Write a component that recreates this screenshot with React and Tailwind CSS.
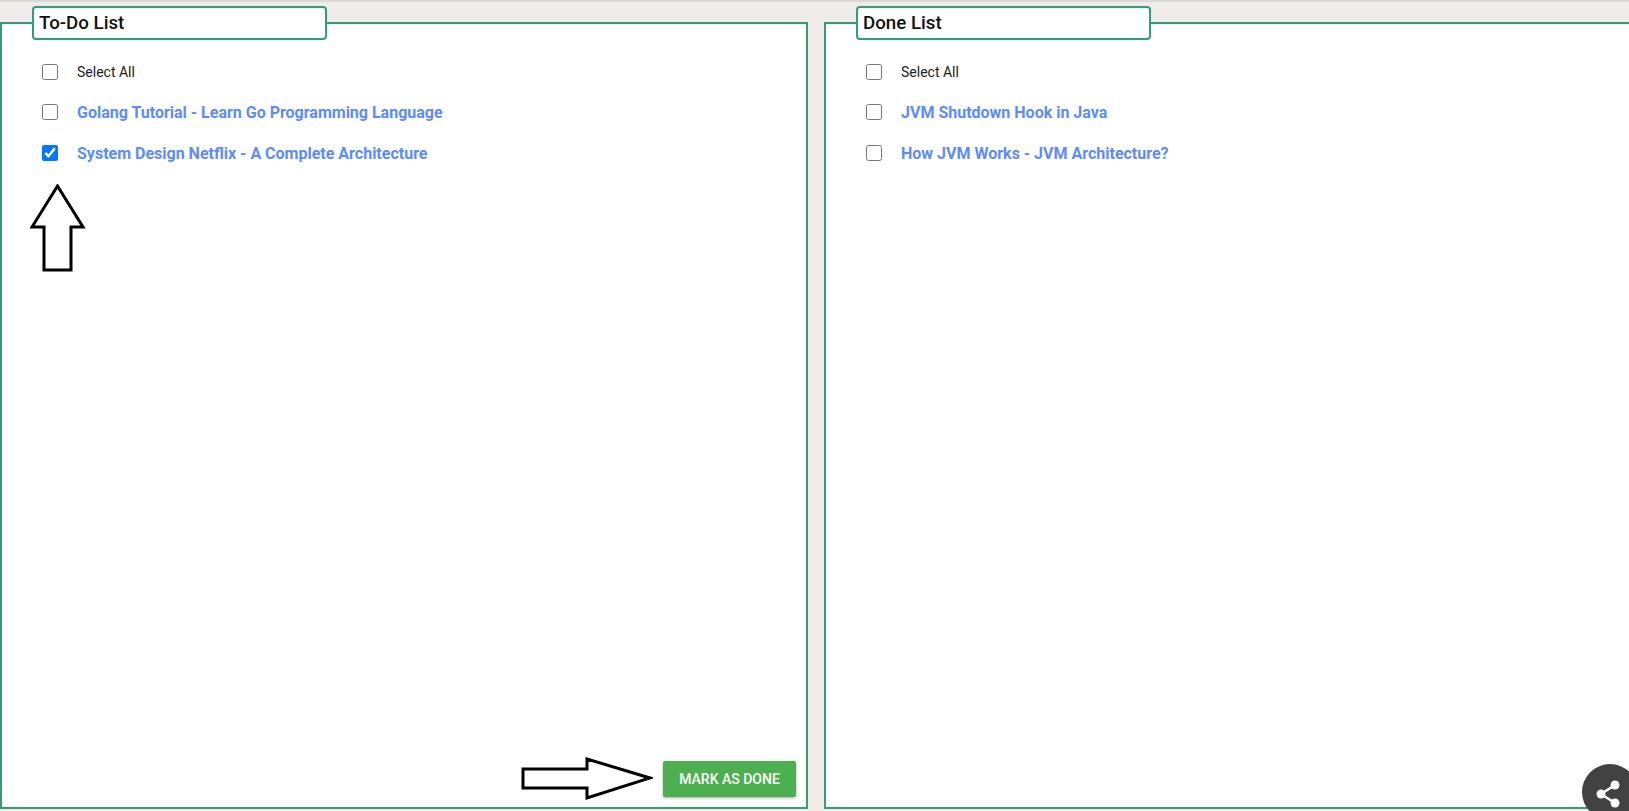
const todo = [
  { title: 'Golang Tutorial - Learn Go Programming Language', checked: false },
  { title: 'System Design Netflix - A Complete Architecture', checked: true },
];

const done = [
  { title: 'JVM Shutdown Hook in Java', checked: false },
  { title: 'How JVM Works - JVM Architecture?', checked: false },
];

function ListPanel({ title, items, children }) {
  return (
    <fieldset className="relative shrink-0 w-[808px] h-[803px] border-2 border-[#319e78] bg-white min-w-0">
      <legend className="ml-[30px] w-[295px] h-[34px] px-[5px] flex items-center bg-white border-2 border-[#319e78] rounded-[4px] text-[18.72px] leading-none font-medium text-[#111]">
        {title}
      </legend>
      <div className="pl-[40px] pt-[24px]">
        <label className="flex items-center h-[16px] mb-[24px]">
          <input type="checkbox" readOnly className="w-[16px] h-[16px] m-0" />
          <span className="ml-[19px] text-[14px] text-[#212121]">Select All</span>
        </label>
        {items.map((item) => (
          <label key={item.title} className="flex items-center h-[16px] mb-[25px]">
            <input type="checkbox" readOnly checked={item.checked} className="w-[16px] h-[16px] m-0" />
            <a href="#" className="ml-[19px] pt-[2px] text-[16px] font-bold text-[#5c8cfb]">{item.title}</a>
          </label>
        ))}
      </div>
      {children}
    </fieldset>
  );
}

export default function App() {
  return (
    <div className="relative w-screen h-[811px] overflow-hidden bg-[#efebe9] font-['Roboto',sans-serif]">
      <div className="h-[2px] bg-[#dcdad8]"></div>
      <div className="flex gap-[16px] pt-[4px]">
        <ListPanel title="To-Do List" items={todo}>
          <button className="absolute right-[10px] bottom-[10px] w-[133px] h-[36px] bg-[#4caf50] text-white text-[14px] font-medium rounded-[2px] shadow-[0_1px_3px_rgba(0,0,0,0.35)]">
            MARK AS DONE
          </button>
        </ListPanel>
        <ListPanel title="Done List" items={done} />
      </div>

      {/* annotation arrows */}
      <svg className="absolute left-[30px] top-[184px]" width="56" height="90" viewBox="0 0 56 90" fill="white" stroke="black" strokeWidth="3">
        <path d="M27.5 2 L53 43 L41 43 L41 86 L14 86 L14 43 L2 43 Z" />
      </svg>
      <svg className="absolute left-[521px] top-[757px]" width="132" height="44" viewBox="0 0 132 44" fill="white" stroke="black" strokeWidth="3">
        <path d="M2 12 L66 12 L66 2 L129 21 L66 41 L66 31 L2 31 Z" />
      </svg>

      <div className="absolute left-[1582px] top-[764px] w-[56px] h-[56px] rounded-full bg-[#424242]">
        <svg width="56" height="56" viewBox="0 0 56 56" fill="white">
          <circle cx="33" cy="21" r="4.5" />
          <circle cx="19" cy="30" r="4.5" />
          <circle cx="33" cy="39" r="4.5" />
          <path d="M19 30 L33 21 M19 30 L33 39" stroke="white" strokeWidth="2.5" />
        </svg>
      </div>
    </div>
  );
}
